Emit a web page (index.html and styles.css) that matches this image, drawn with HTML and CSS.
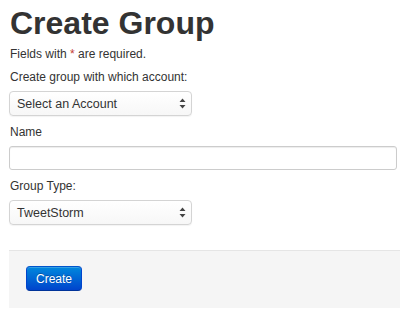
FILE: index.html
```html
<!DOCTYPE html>
<html>
<head>
<meta charset="utf-8">
<link rel="stylesheet" href="styles.css">
</head>
<body>
<div class="page">
  <h1 class="title">Create Group</h1>
  <p class="note">Fields with <span class="req">*</span> are required.</p>
  <div class="group">
    <label class="label">Create group with which account:</label>
    <div class="select">
      <span>Select an Account</span>
      <svg class="arrows" width="7" height="11" viewBox="0 0 7 11"><path d="M3.5 0.5 L6.5 4 L0.5 4 Z M3.5 10.5 L6.5 7 L0.5 7 Z" fill="#444"/></svg>
    </div>
  </div>
  <div class="group">
    <label class="label">Name</label>
    <div class="input"></div>
  </div>
  <div class="group last">
    <label class="label">Group Type:</label>
    <div class="select">
      <span>TweetStorm</span>
      <svg class="arrows" width="7" height="11" viewBox="0 0 7 11"><path d="M3.5 0.5 L6.5 4 L0.5 4 Z M3.5 10.5 L6.5 7 L0.5 7 Z" fill="#444"/></svg>
    </div>
  </div>
  <div class="actions">
    <button class="btn">Create</button>
  </div>
</div>
</body>
</html>
```
FILE: styles.css
```css
html, body {
  margin: 0;
  padding: 0;
  background: #fff;
}
body {
  font-family: "Liberation Sans", Arial, sans-serif;
  font-size: 12px;
  color: #333;
}
.page {
  padding: 5px 0 0 9px;
}
.title {
  margin: 0 0 0 1px;
  font-size: 32px;
  line-height: 36px;
  font-weight: bold;
  color: #333;
}
.note {
  margin: 4px 0 5px 1px;
  line-height: 18px;
}
.req {
  color: #c43c35;
}
.group {
  margin-bottom: 7px;
}
.group.last {
  margin-bottom: 25px;
}
.label {
  display: block;
  margin: 0 0 5px 1px;
  line-height: 18px;
}
.select {
  box-sizing: border-box;
  width: 183px;
  height: 25px;
  border: 1px solid #d4d4d4;
  border-radius: 4px;
  background: linear-gradient(#ffffff, #f7f7f7);
  display: flex;
  align-items: center;
  justify-content: space-between;
  padding: 0 5px 0 7px;
  font-size: 12.5px;
  color: #333;
  box-shadow: 0 1px 1px rgba(0,0,0,0.05);
}
.arrows {
  display: block;
}
.input {
  box-sizing: border-box;
  width: 388px;
  height: 24px;
  border: 1px solid #ccc;
  border-radius: 3px;
  background: #fff;
  box-shadow: inset 0 1px 1px rgba(0,0,0,0.075);
}
.actions {
  background: #f5f5f5;
  border-top: 1px solid #e5e5e5;
  padding: 15px 0 0 17px;
  box-sizing: border-box;
  height: 58px;
}
.btn {
  width: 56px;
  height: 25px;
  border: 1px solid #0044cc;
  border-color: #0055cc #0044cc #003399;
  border-radius: 4px;
  background: linear-gradient(#0088dd, #0044cc);
  color: #fff;
  font-family: "Liberation Sans", Arial, sans-serif;
  font-size: 12px;
  padding: 0;
  text-shadow: 0 -1px 0 rgba(0,0,0,0.25);
  box-shadow: inset 0 1px 0 rgba(255,255,255,0.2);
}
```
